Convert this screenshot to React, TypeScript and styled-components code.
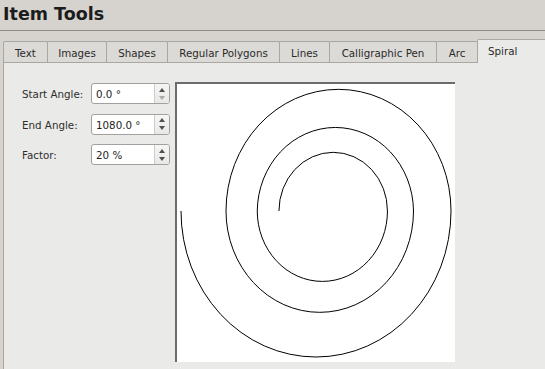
import React from 'react';
import styled, { createGlobalStyle } from 'styled-components';

const Global = createGlobalStyle`
  html, body { margin: 0; padding: 0; background: #d6d2ce; overflow: hidden; }
  body { font-family: "DejaVu Sans", "Liberation Sans", sans-serif; font-size: 10.3px; color: #2e2e2e; }
`;

const Window = styled.div`
  width: 545px;
  height: 369px;
  display: flex;
  flex-direction: column;
  overflow: hidden;
  background: #d6d2ce;
`;

const Header = styled.div`
  height: 31px;
  box-sizing: border-box;
  padding: 3px 0 0 3px;
  border-bottom: 1px solid #8e8c8a;
  font-weight: bold;
  font-size: 17.5px;
  line-height: 22px;
  color: #1c1c1c;
`;

const TabBar = styled.div`
  display: flex;
  align-items: flex-end;
  margin-top: 8px;
  padding-left: 3px;
  height: 23px;
  position: relative;
  z-index: 1;
`;

const Tab = styled.div<{ $w: number; $active?: boolean }>`
  flex: none;
  width: ${p => p.$w}px;
  box-sizing: border-box;
  height: ${p => (p.$active ? 24 : 21)}px;
  margin-bottom: ${p => (p.$active ? -1 : 0)}px;
  margin-right: -1px;
  border: 1px solid #aaa7a3;
  border-bottom: none;
  border-radius: 2px 2px 0 0;
  background: ${p => (p.$active ? '#eaeae8' : '#dcdad6')};
  padding-top: 2px;
  line-height: 18px;
  text-align: ${p => (p.$active ? 'left' : 'center')};
  padding-left: ${p => (p.$active ? 10 : 0)}px;
  color: #2a2a2a;
  white-space: nowrap;
`;

const Panel = styled.div`
  flex: 1;
  margin-left: 3px;
  border-left: 1px solid #aaa7a3;
  border-top: 1px solid #aaa7a3;
  background: #eaeae8;
  display: flex;
  align-items: flex-start;
  padding: 19px 0 0 18px;
`;

const Form = styled.div`
  display: grid;
  grid-template-columns: 69px 79px;
  row-gap: 9.5px;
  margin-top: 1px;
  align-items: center;
`;

const Label = styled.div`
  color: #2e2e2e;
  padding-top: 1px;
  line-height: 20px;
`;

const SpinBox = styled.div`
  height: 21px;
  box-sizing: border-box;
  border: 1px solid #a3a19e;
  border-radius: 3px;
  background: #ffffff;
  display: flex;
  overflow: hidden;
`;

const SpinValue = styled.div`
  flex: 1;
  padding: 1px 0 0 4px;
  line-height: 18px;
  color: #1e1e1e;
`;

const SpinButtons = styled.div`
  width: 14px;
  border-left: 1px solid #cfcdca;
  background: linear-gradient(#f6f6f5, #e9e8e6);
  display: flex;
  flex-direction: column;
  align-items: center;
  justify-content: center;
  gap: 4px;
`;

const Arrow = styled.div<{ $down?: boolean; $disabled?: boolean }>`
  width: 0;
  height: 0;
  border-left: 3.5px solid transparent;
  border-right: 3.5px solid transparent;
  ${p =>
    p.$down
      ? `border-top: 4px solid ${p.$disabled ? '#a9a9a9' : '#505050'};`
      : `border-bottom: 4px solid ${p.$disabled ? '#a9a9a9' : '#505050'};`}
`;

const Canvas = styled.div`
  margin-left: 5px;
  width: 280px;
  height: 280px;
  box-sizing: border-box;
  border-top: 2px solid #6c6c6c;
  border-left: 2px solid #6c6c6c;
  background: #ffffff;
`;

const SpiralSvg = styled.svg`
  display: block;
`;

const tabs: { name: string; w: number }[] = [
  { name: 'Text', w: 45 },
  { name: 'Images', w: 60 },
  { name: 'Shapes', w: 62 },
  { name: 'Regular Polygons', w: 113 },
  { name: 'Lines', w: 51 },
  { name: 'Calligraphic Pen', w: 108 },
  { name: 'Arc', w: 42 },
];

function spiralPath(): string {
  const cy = 212;
  let x = 181;
  let rx = 135;
  let ry = 146;
  let d = `M${x} ${cy}`;
  for (let k = 0; k < 6; k++) {
    const dir = k % 2 === 0 ? 1 : -1;
    const nx = x + dir * 2 * rx;
    d += ` A${rx.toFixed(2)} ${ry.toFixed(2)} 0 0 0 ${nx.toFixed(2)} ${cy}`;
    x = nx;
    rx /= 1.2;
    ry /= 1.2;
  }
  return d;
}

const rows = [
  { label: 'Start Angle:', value: '0.0 °', minDisabled: true },
  { label: 'End Angle:', value: '1080.0 °', minDisabled: false },
  { label: 'Factor:', value: '20 %', minDisabled: false },
];

export default function App() {
  return (
    <Window>
      <Global />
      <Header>Item Tools</Header>
      <TabBar>
        {tabs.map(t => (
          <Tab key={t.name} $w={t.w}>
            {t.name}
          </Tab>
        ))}
        <Tab $w={72} $active>
          Spiral
        </Tab>
      </TabBar>
      <Panel>
        <Form>
          {rows.map(r => (
            <React.Fragment key={r.label}>
              <Label>{r.label}</Label>
              <SpinBox>
                <SpinValue>{r.value}</SpinValue>
                <SpinButtons>
                  <Arrow />
                  <Arrow $down $disabled={r.minDisabled} />
                </SpinButtons>
              </SpinBox>
            </React.Fragment>
          ))}
        </Form>
        <Canvas>
          <SpiralSvg width={278} height={278} viewBox="177 85 278 278">
            <path d={spiralPath()} fill="none" stroke="#000" strokeWidth={1} />
          </SpiralSvg>
        </Canvas>
      </Panel>
    </Window>
  );
}
